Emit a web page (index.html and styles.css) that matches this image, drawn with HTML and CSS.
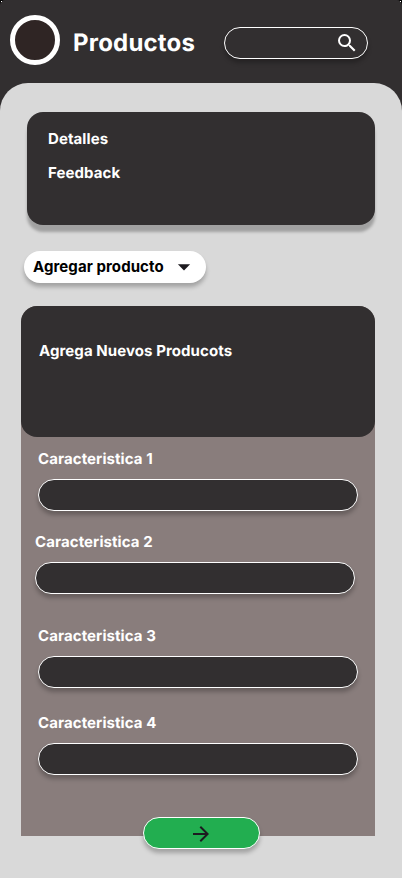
FILE: index.html
```html
<!DOCTYPE html>
<html lang="es">
<head>
<meta charset="utf-8">
<title>Productos</title>
<link rel="stylesheet" href="styles.css">
</head>
<body>
<div class="screen">
  <header class="header">
    <div class="avatar"></div>
    <h1 class="title">Productos</h1>
    <div class="search">
      <svg class="search-icon" width="24" height="24" viewBox="0 0 24 24" fill="#fff"><path d="M15.5 14h-.79l-.28-.27A6.471 6.471 0 0 0 16 9.5 6.5 6.5 0 1 0 9.5 16c1.61 0 3.09-.59 4.23-1.57l.27.28v.79l5 4.99L20.49 19l-4.99-5zm-6 0C7.01 14 5 11.99 5 9.5S7.01 5 9.5 5 14 7.01 14 9.5 11.99 14 9.5 14z"/></svg>
    </div>
  </header>
  <main class="sheet">
    <section class="summary">
      <p>Detalles</p>
      <p>Feedback</p>
    </section>
    <button class="dropdown">
      <span>Agregar producto</span>
      <svg width="24" height="24" viewBox="0 0 24 24" fill="#1d1b20"><path d="M5.9 9.3h12.2L12 15.4z"/></svg>
    </button>
    <section class="panel">
      <div class="panel-head">Agrega Nuevos Producots</div>
      <div class="field"><p>Caracteristica 1</p><div class="input"></div></div>
      <div class="field second"><p>Caracteristica 2</p><div class="input"></div></div>
      <div class="field third"><p>Caracteristica 3</p><div class="input"></div></div>
      <div class="field fourth"><p>Caracteristica 4</p><div class="input"></div></div>
      <button class="submit" aria-label="Continuar">
        <svg width="24" height="24" viewBox="0 0 24 24" fill="#1d1b20"><path d="M16.175 13H4v-2h12.175l-5.6-5.6L12 4l8 8-8 8-1.425-1.4z"/></svg>
      </button>
    </section>
  </main>
</div>
</body>
</html>
```
FILE: styles.css
```css
* { box-sizing: border-box; }
body {
  margin: 0;
  background: #000;
  font: 700 15px/18px Inter, sans-serif;
  letter-spacing: .08px;
  text-rendering: geometricPrecision;
  color: #fff;
}
h1, p { margin: 0; }
button { border: 0; padding: 0; font: inherit; letter-spacing: inherit; }
svg { display: block; flex: none; }
.screen {
  width: 402px;
  height: 878px;
  background: #322f30;
  border-radius: 5px 5px 0 0;
}
.screen::before,
.screen::after {
  content: "";
  position: absolute;
  top: 1px;
  left: 1px;
  width: 1px;
  height: 1px;
  background: #fff;
}
.screen::after { left: 400px; }
.header {
  display: flex;
  align-items: flex-start;
  height: 83px;
  padding: 15px 34px 0 10px;
}
.avatar {
  width: 50px;
  height: 50px;
  border: 5px solid #fff;
  border-radius: 50%;
  background: #2f2524;
}
.title {
  margin: 13px 0 0 13px;
  font-size: 24px;
  line-height: 29px;
  font-weight: 700;
  letter-spacing: .2px;
}
.search {
  display: flex;
  align-items: center;
  justify-content: flex-end;
  width: 144px;
  height: 32px;
  margin: 12px 0 0 auto;
  padding-right: 8px;
  border: 1px solid #fff;
  border-radius: 16px;
  background: #322f30;
  box-shadow: 0 4px 4px rgba(0, 0, 0, .25);
}
.sheet {
  height: 795px;
  padding: 29px 27px 0 21px;
  border-radius: 28px 28px 0 0;
  background: #d9d9d9;
}
.summary {
  display: flex;
  flex-direction: column;
  gap: 16px;
  height: 113px;
  margin-left: 6px;
  padding: 18px 21px;
  border-radius: 16px;
  background: #322f30;
  box-shadow: 0 7px 3px rgba(0, 0, 0, .26);
}
.dropdown {
  display: flex;
  align-items: center;
  justify-content: space-between;
  width: 182px;
  height: 32px;
  margin: 26px 0 0 3px;
  padding: 0 10px 0 9px;
  border-radius: 16px;
  background: #fff;
  color: #000;
  box-shadow: 0 4px 4px rgba(0, 0, 0, .25);
}
.panel {
  height: 530px;
  margin-top: 23px;
  border-radius: 16px 16px 0 0;
  background: #897d7c;
}
.panel-head {
  height: 131px;
  padding: 36px 18px;
  border-radius: 16px;
  background: #322f30;
}
.field { margin: 13px 17px 0; }
.second { margin: 22px 20px 0 14px; }
.third { margin-top: 33px; }
.fourth { margin-top: 26px; }
.input {
  height: 32px;
  margin-top: 11px;
  border: 1px solid #fff;
  border-radius: 16px;
  background: #322f30;
  box-shadow: 0 4px 4px rgba(0, 0, 0, .25);
}
.submit {
  display: flex;
  align-items: center;
  justify-content: center;
  width: 117px;
  height: 32px;
  margin: 42px 0 0 122px;
  padding: 2px 2px 0 0;
  border: 1px solid #fff;
  border-radius: 16px;
  background: #22ae50;
  box-shadow: 0 4px 4px rgba(0, 0, 0, .25);
}
```
